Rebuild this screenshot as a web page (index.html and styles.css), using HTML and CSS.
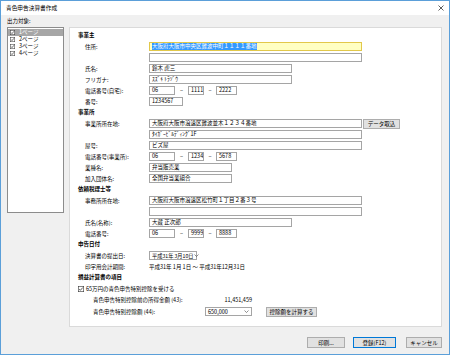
FILE: index.html
```html
<!DOCTYPE html>
<html lang="ja">
<head>
<meta charset="utf-8">
<title>青色申告決算書作成</title>
<link rel="stylesheet" href="styles.css">
</head>
<body>
<div class="window">
  <div class="titlebar">
    <span class="title">青色申告決算書作成</span>
    <svg class="close" width="6" height="6" viewBox="0 0 6 6"><path d="M0.5 0.5L5.5 5.5M5.5 0.5L0.5 5.5" stroke="#333" stroke-width="0.8"/></svg>
  </div>
  <div class="body">
    <div class="outlabel">出力対象:</div>
    <div class="spacer"></div>
    <div class="listbox">
      <div class="item sel"><svg class="cb" width="5" height="5" viewBox="0 0 10 10"><rect x="0.5" y="0.5" width="9" height="9" fill="#fff" stroke="#333"/><path d="M2 5l2 2.2L8 2.5" fill="none" stroke="#333" stroke-width="1.4"/></svg>1ページ</div>
      <div class="item"><svg class="cb" width="5" height="5" viewBox="0 0 10 10"><rect x="0.5" y="0.5" width="9" height="9" fill="#fff" stroke="#333"/><path d="M2 5l2 2.2L8 2.5" fill="none" stroke="#333" stroke-width="1.4"/></svg>2ページ</div>
      <div class="item"><svg class="cb" width="5" height="5" viewBox="0 0 10 10"><rect x="0.5" y="0.5" width="9" height="9" fill="#fff" stroke="#333"/><path d="M2 5l2 2.2L8 2.5" fill="none" stroke="#333" stroke-width="1.4"/></svg>3ページ</div>
      <div class="item"><svg class="cb" width="5" height="5" viewBox="0 0 10 10"><rect x="0.5" y="0.5" width="9" height="9" fill="#fff" stroke="#333"/><path d="M2 5l2 2.2L8 2.5" fill="none" stroke="#333" stroke-width="1.4"/></svg>4ページ</div>
    </div>
    <div class="panel">
      <div class="sec first">事業主</div>
      <div class="row"><span class="lab">住所:</span><span class="in w-long focus"><span class="hl">大阪府大阪市中央区難波中町１１１１番地</span></span></div>
      <div class="row"><span class="lab"></span><span class="in w-long"></span></div>
      <div class="row"><span class="lab">氏名:</span><span class="in w-mid">鈴木 虎三</span></div>
      <div class="row"><span class="lab">フリガナ:</span><span class="in w-mid">ｽｽﾞｷ ﾄﾗｿﾞｳ</span></div>
      <div class="row"><span class="lab">電話番号(自宅):</span><span class="in p1">06</span><span class="dash">−</span><span class="in p2">1111</span><span class="dash d2">−</span><span class="in p3">2222</span></div>
      <div class="row"><span class="lab">番号:</span><span class="in w-num">1234567</span></div>

      <div class="sec">事業所</div>
      <div class="row"><span class="lab">事業所所在地:</span><span class="in w-long">大阪府大阪市浪速区難波並木１２３４番地</span><span class="btn data">データ取込</span></div>
      <div class="row"><span class="lab"></span><span class="in w-long">ﾀｲｶﾞｰﾋﾞﾙﾃﾞｨﾝｸﾞ1F</span></div>
      <div class="row"><span class="lab">屋号:</span><span class="in w-long">ビズ屋</span></div>
      <div class="row"><span class="lab">電話番号(事業所):</span><span class="in p1">06</span><span class="dash">−</span><span class="in p2">1234</span><span class="dash d2">−</span><span class="in p3">5678</span></div>
      <div class="row"><span class="lab">業種名:</span><span class="in w-short">弁当販売業</span></div>
      <div class="row"><span class="lab">加入団体名:</span><span class="in w-short">全国弁当業組合</span></div>

      <div class="sec">依頼税理士等</div>
      <div class="row"><span class="lab">事務所所在地:</span><span class="in w-long">大阪府大阪市浪速区松竹町１丁目２番３号</span></div>
      <div class="row"><span class="lab"></span><span class="in w-long"></span></div>
      <div class="row"><span class="lab">氏名(名称):</span><span class="in w-mid">大蔵 正次郎</span></div>
      <div class="row"><span class="lab">電話番号:</span><span class="in p1">06</span><span class="dash">−</span><span class="in p2">9999</span><span class="dash d2">−</span><span class="in p3">8888</span></div>

      <div class="sec">申告日付</div>
      <div class="row"><span class="lab">決算書の提出日:</span><span class="select s-date"><span>平成31年 3月10日</span><svg width="5" height="3" viewBox="0 0 10 6"><path d="M1 1l4 4 4-4" fill="none" stroke="#444" stroke-width="1.2"/></svg></span></div>
      <div class="row"><span class="lab">印字用会計期間:</span><span class="plain">平成31年 1月 1日 〜 平成31年12月31日</span></div>

      <div class="sec">損益計算書の項目</div>
      <div class="row chk"><svg class="pcb" width="6" height="6" viewBox="0 0 10 10"><rect x="0.5" y="0.5" width="9" height="9" fill="#fff" stroke="#333"/><path d="M2 5l2 2.2L8 2.5" fill="none" stroke="#333" stroke-width="1.3"/></svg><span>65万円の青色申告特別控除を受ける</span></div>
      <div class="row sub"><span class="sublab">青色申告特別控除前の所得金額 (43):</span><span class="val">11,451,459</span></div>
      <div class="row sub last"><span class="sublab">青色申告特別控除額 (44):</span><span class="select s-amt"><span>650,000</span><svg width="5" height="3" viewBox="0 0 10 6"><path d="M1 1l4 4 4-4" fill="none" stroke="#444" stroke-width="1.2"/></svg></span><span class="btn calc">控除額を計算する</span></div>
    </div>
  </div>
  <div class="footer">
    <span class="btn b-print">印刷...</span>
    <span class="btn b-save default">登録(F12)</span>
    <span class="btn b-cancel">キャンセル</span>
  </div>
</div>
</body>
</html>
```

FILE: styles.css
```css
* { box-sizing: border-box; margin: 0; padding: 0; }
html, body { width: 450px; height: 355px; overflow: hidden; }
body {
  font-family: "Noto Sans CJK JP", "Noto Sans", sans-serif;
  font-size: 5.5px;
  color: #000;
  background: #fff;
}
.window {
  width: 450px;
  height: 355px;
  border: 1px solid #5b9fd9;
  background: #f0f0f0;
  display: flex;
  flex-direction: column;
}
.titlebar {
  height: 14px;
  flex: none;
  background: #fff;
  display: flex;
  align-items: center;
  justify-content: space-between;
  padding: 0 5px 0 5px;
}
.title { font-size: 5.7px; line-height: 14px; color: #000; }
.close { display: block; }

.body {
  display: grid;
  grid-template-columns: 57px 373px;
  grid-template-rows: 12px 300px;
  column-gap: 5px;
  padding: 0 7px 0 6px;
  flex: none;
}
.outlabel { line-height: 12px; white-space: nowrap; }
.listbox {
  height: 186px;
  background: #fff;
  border: 1px solid #8c8c8c;
  padding: 1px 0;
}
.item {
  height: 7px;
  display: flex;
  align-items: center;
  padding-left: 2px;
  white-space: nowrap;
  line-height: 7px;
}
.item .cb { display: block; margin-right: 4px; flex: none; }
.item.sel { background: #a6a6a6; color: #fff; }

.panel {
  background: #fff;
  border: 1px solid #dadada;
  padding-top: 1px;
}
.sec {
  height: 11px;
  line-height: 11px;
  padding-left: 8px;
  font-weight: bold;
  white-space: nowrap;
}
.sec.first { margin-top: 1px; }
.row {
  height: 11px;
  display: flex;
  align-items: center;
  padding-left: 15px;
  white-space: nowrap;
}
.lab { width: 64px; flex: none; }
.in {
  height: 9px;
  flex: none;
  border: 1px solid #a5a5a5;
  background: #fff;
  line-height: 7px;
  padding-left: 2px;
  overflow: hidden;
  white-space: nowrap;
}
.in.focus { background: #ffffc2; border-color: #e2c84a; }
.hl { background: #3399ff; color: #fff; }
.w-long { width: 213px; }
.w-mid { width: 143px; }
.w-num { width: 34px; }
.w-short { width: 83px; }
.p1 { width: 26px; }
.p2 { width: 16px; }
.p3 { width: 21px; }
.dash { width: 13px; text-align: center; flex: none; }
.dash.d2 { width: 12px; }

.btn {
  display: flex;
  align-items: center;
  justify-content: center;
  flex: none;
  background: #e1e1e1;
  border: 1px solid #adadad;
  white-space: nowrap;
}
.btn.data { width: 37px; height: 10px; margin-left: 1px; }
.btn.calc { width: 51px; height: 10px; margin-left: 14px; }

.select {
  height: 9px;
  flex: none;
  display: flex;
  align-items: center;
  justify-content: space-between;
  border: 1px solid #a5a5a5;
  background: #fff;
  padding: 0 2px 0 2px;
}
.select svg { display: block; flex: none; }
.s-date { width: 48px; font-size: 5.2px; }
.s-amt { width: 47px; }
.plain { white-space: nowrap; }

.row.chk { padding-left: 8px; }
.pcb { display: block; margin-right: 2px; flex: none; }
.row.sub { padding-left: 23px; }
.row.last { height: 13px; }
.sublab { width: 112px; flex: none; }
.val { width: 47px; text-align: right; flex: none; }

.footer {
  flex: 1;
  display: flex;
  justify-content: flex-end;
  align-items: flex-start;
  padding: 10px 7px 0 0;
}
.footer .btn { height: 11px; }
.b-print { width: 38px; }
.b-save { width: 43px; margin-left: 8px; }
.b-cancel { width: 36px; margin-left: 10px; }
.btn.default { border-color: #0078d7; }
```
